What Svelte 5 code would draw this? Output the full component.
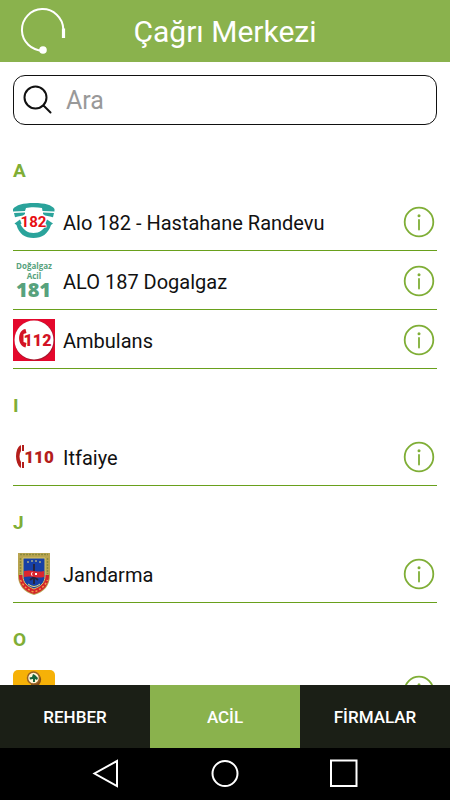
<script>
  const sections = [
    {
      letter: 'A',
      items: [
        { icon: 'health', name: 'Alo 182 - Hastahane Randevu' },
        { icon: 'gas', name: 'ALO 187 Dogalgaz' },
        { icon: 'ambulance', name: 'Ambulans' }
      ]
    },
    { letter: 'I', items: [{ icon: 'fire', name: 'Itfaiye' }] },
    { letter: 'J', items: [{ icon: 'gendarme', name: 'Jandarma' }] },
    { letter: 'O', items: [{ icon: 'forest', name: '' }] }
  ];
  const tabs = ['REHBER', 'ACİL', 'FİRMALAR'];
  let active = $state('ACİL');
  let query = $state('');
</script>

<div class="app">
  <header>
    <svg class="logo" viewBox="0 0 48 48" width="48" height="48" fill="none" stroke="#fff" aria-hidden="true">
      <path d="M23 43.500A20.700 20.700 0 1 1 43.300 22" stroke-width="2" />
      <path d="M43.500 21.500V31" stroke-width="3.200" />
      <circle cx="23" cy="43" r="3.800" fill="#fff" stroke="none" />
    </svg>
    <h1>Çağrı Merkezi</h1>
  </header>

  <label class="search">
    <svg viewBox="0 0 30 30" width="30" height="30" fill="none" stroke="#111" stroke-width="2" stroke-linecap="round" aria-hidden="true">
      <circle cx="12.500" cy="12.500" r="11" />
      <path d="M20.500 20.500L27.500 27.500" />
    </svg>
    <input type="text" placeholder="Ara" aria-label="Ara" bind:value={query} />
  </label>

  <main>
    {#each sections as section}
      <section>
        <h2>{section.letter}</h2>
        <ul>
          {#each section.items as item}
            <li>
              <svg class="icon" viewBox="0 0 42 42" width="42" height="42" aria-hidden="true">
                {#if item.icon === 'health'}
                  <g fill="#2aa39b">
                    <path d="M0 8C3 4 10 2 21 2s18 2 20.500 6v2.500l-12-.5-.5-3C24 6 17 6 13 7l-1 3-12 .5z" />
                    <path d="M1 12l11-.5v1.500l-2 1.500-5 1-3 .8zM41 12l-11-.5v1.500l2 1.500 5 1 3 .8z" />
                    <path d="M1.500 22.500L7 18.500l1.500 4-1 1C11 29 14 32 20.500 32S30 29 33.500 23.500l-1-1 1.500-4 6 4-2 1.500C35 33 29 37 20.500 37S6 33 3.500 24z" />
                  </g>
                  <text x="20.500" y="26" text-anchor="middle" font-size="15" font-weight="700" fill="#e80d12" stroke="#fff" stroke-width="1" paint-order="stroke">182</text>
                {:else if item.icon === 'gas'}
                  <g fill="#57a27d" text-anchor="middle" class="sign">
                    <text x="21" y="9" font-size="8" font-weight="700">Doğalgaz</text>
                    <text x="21" y="19" font-size="8" font-weight="700">Acil</text>
                    <text x="20.500" y="37" font-size="20" font-weight="800">181</text>
                  </g>
                {:else if item.icon === 'ambulance'}
                  <rect width="42" height="42" fill="#e4082c" />
                  <circle cx="21.500" cy="21.500" r="20" fill="#a9172d" />
                  <circle cx="21" cy="21" r="19.500" fill="#fff" />
                  <path d="M12.500 10C4 11 4 27 12.500 28.500l1-4.500-3-1v-8l3-1z" fill="#d31325" />
                  <text x="24.500" y="26.500" text-anchor="middle" font-size="16" font-weight="900" fill="#d31325">112</text>
                {:else if item.icon === 'fire'}
                  <g fill="#b41e1b">
                    <path d="M7.500 9C1.500 13 1.500 27 7.500 32l.5-1v-5c-2-3-2-8 0-11v-5z" />
                    <path d="M9 9h2v6H9zM9 26h2v6H9z" />
                    <text x="26" y="27" text-anchor="middle" font-size="17" font-weight="900">110</text>
                  </g>
                {:else if item.icon === 'gendarme'}
                  <path d="M5 0h32v22c0 11-6 17-16 20C11 39 5 33 5 22z" fill="#b9a450" />
                  <path d="M6 22h30c0 10-5 16-15 19C11 38 6 32 6 22z" fill="#d3222b" />
                  <path d="M10 5h22v18c0 7-4 10-11 13-7-3-11-6-11-13z" fill="#1740a6" stroke="#d5c66d" />
                  <path d="M7 1.500h28M7.500 5v16M34.500 5v16" stroke="#8a8a3c" stroke-width="1.500" stroke-dasharray="2 1" />
                  <path d="M21 11v20M17 27l4-3 4 3" stroke="#26243e" stroke-width="2" fill="none" />
                  <path d="M11 18q5-1 10 0t10 0v6q-5 1-10 0t-10 0z" fill="#da2630" />
                  <path d="M15 31q6 5 12 0M14 9h2M18 8h2M22 8h2M26 9h2" stroke="#e8db7f" stroke-width="1" fill="none" />
                  <path d="M20 19a2 2 0 1 0 0 4 2.500 2.500 0 0 1 0-4M22 20h2v2h-2z" fill="#fff" />
                  <path d="M7.500 27q4 9 13.500 12 9.500-3 13.500-12" fill="none" stroke="#efa04a" stroke-width="1.500" stroke-dasharray="2 2" />
                {:else}
                  <rect width="42" height="42" rx="5" fill="#f6b107" />
                  <path d="M24 3q7 5 2 12h-8v-3z" fill="#865018" />
                  <circle cx="20.500" cy="8" r="6" fill="#fff4d5" stroke="#996123" stroke-width="1.500" />
                  <path d="M20 4l2 1 3 3-1 2-2-1v3h-2V9l-3 .5-.5-2L19 7z" fill="#17633b" />
                {/if}
              </svg>
              <span>{item.name}</span>
              <button class="info" aria-label="Bilgi">
                <svg viewBox="0 0 32 32" width="32" height="32" fill="none" stroke="#7fae36" stroke-width="1.800" aria-hidden="true">
                  <circle cx="16" cy="16" r="14.300" />
                  <path d="M16 14v9.500" stroke-linecap="round" />
                  <circle cx="16" cy="9.700" r="1.500" fill="#7fae36" stroke="none" />
                </svg>
              </button>
            </li>
          {/each}
        </ul>
      </section>
    {/each}
  </main>

  <nav class="tabs">
    {#each tabs as tab}
      <button class:active={active === tab} onclick={() => (active = tab)}>{tab}</button>
    {/each}
  </nav>

  <div class="system">
    <button aria-label="Geri">
      <svg viewBox="0 0 30 30" width="30" height="30"><path d="M26 2v25L3.500 14.500z" /></svg>
    </button>
    <button aria-label="Ana ekran">
      <svg viewBox="0 0 30 30" width="30" height="30"><circle cx="15" cy="14.500" r="12.500" /></svg>
    </button>
    <button aria-label="Son uygulamalar">
      <svg viewBox="0 0 30 30" width="30" height="30"><rect x="2" y="1.500" width="25.500" height="25.500" /></svg>
    </button>
  </div>
</div>

<style>
  .app {
    display: flex;
    flex-direction: column;
    height: 100vh;
    background: #fff;
    color: #111;
    font-family: Roboto, sans-serif;
  }
  button {
    border: 0;
    padding: 0;
    background: none;
    font: inherit;
    color: inherit;
    cursor: pointer;
  }
  svg {
    display: block;
    flex: none;
  }
  header {
    flex: none;
    display: grid;
    grid-template-columns: 48px 1fr 48px;
    align-items: center;
    height: 62px;
    padding: 0 20px;
    background: #8ab24d;
    color: #fff;
  }
  h1 {
    margin: 0;
    padding-top: 2px;
    font-size: 30px;
    line-height: 36px;
    font-weight: 400;
    text-align: center;
  }
  .search {
    flex: none;
    display: flex;
    align-items: center;
    gap: 13px;
    box-sizing: border-box;
    height: 50px;
    margin: 13px 13px 9px;
    padding: 0 9px;
    border: 1px solid #111;
    border-radius: 12px;
  }
  input {
    flex: 1;
    min-width: 0;
    border: 0;
    padding: 2px 0 0;
    outline: 0;
    background: none;
    font: 400 25px/32px Roboto, sans-serif;
    color: #111;
  }
  input::placeholder {
    color: #999;
    opacity: 1;
  }
  main {
    flex: 1;
    min-height: 0;
    overflow: hidden;
    padding: 0 13px;
  }
  h2 {
    box-sizing: border-box;
    height: 58px;
    margin: 0;
    padding-top: 25px;
    font-size: 19px;
    line-height: 24px;
    font-weight: 700;
    color: #7fae36;
  }
  ul {
    margin: 0;
    padding: 0;
    list-style: none;
  }
  li {
    display: flex;
    align-items: center;
    gap: 8px;
    box-sizing: border-box;
    height: 59px;
    padding: 1px 2px 0 0;
    border-bottom: 1px solid #69a01c;
    font-size: 20px;
    line-height: 24px;
  }
  li span {
    flex: 1;
    padding-top: 2px;
  }
  .sign {
    font-family: "Open Sans", sans-serif;
  }
  .tabs {
    flex: none;
    display: flex;
    height: 63px;
    background: #1b1f16;
    color: #fff;
  }
  .tabs button {
    flex: 1;
    font-size: 17px;
    font-weight: 500;
  }
  .tabs .active {
    background: #8ab24d;
  }
  .system {
    flex: none;
    display: flex;
    justify-content: center;
    align-items: center;
    gap: 89px;
    height: 52px;
    background: #000;
  }
  .system svg {
    fill: none;
    stroke: #fff;
    stroke-width: 2;
  }
</style>
